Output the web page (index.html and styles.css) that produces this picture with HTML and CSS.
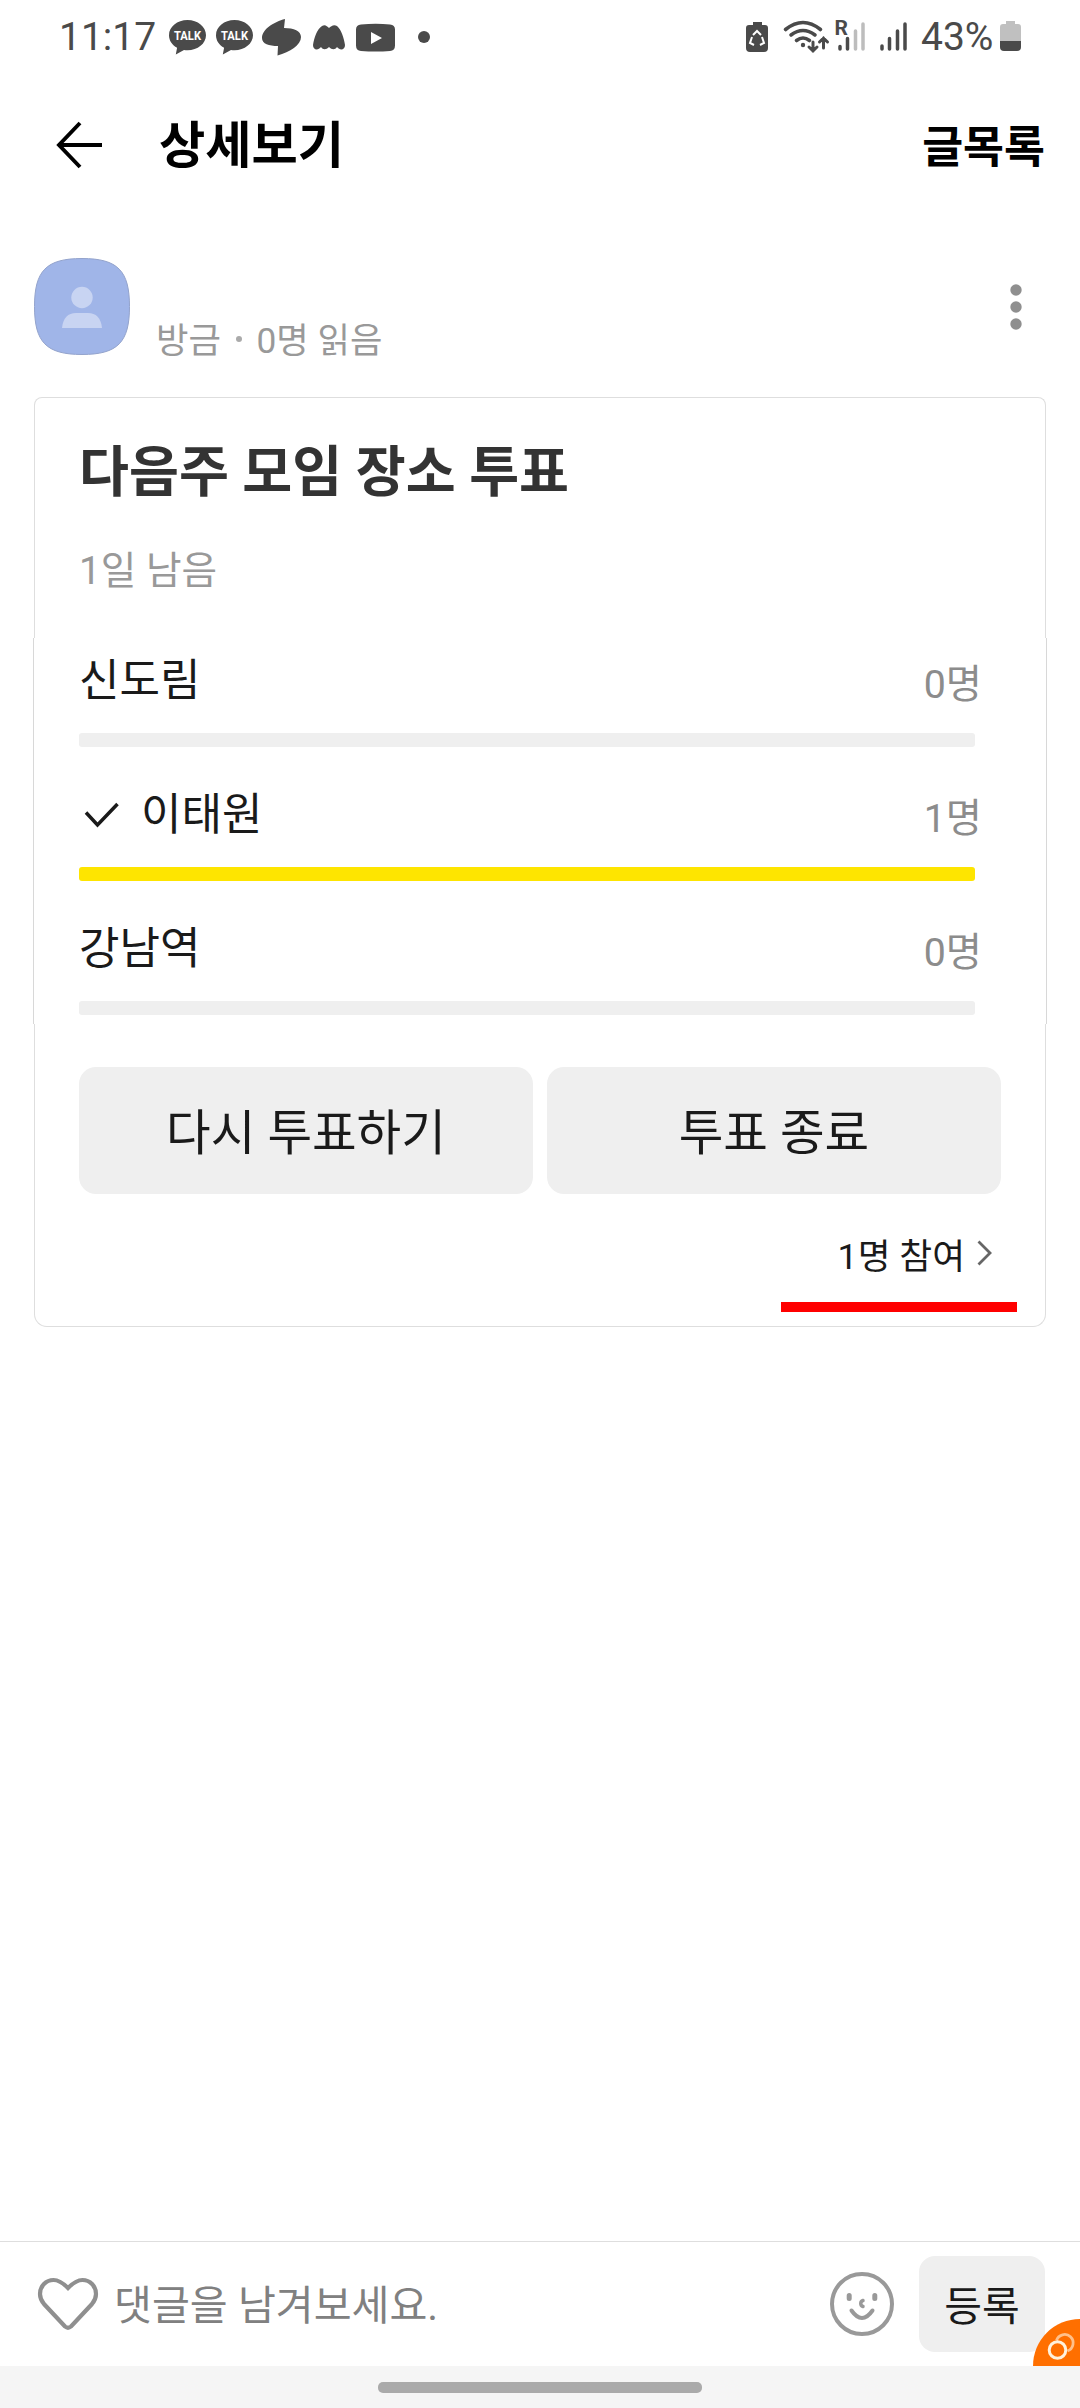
FILE: index.html
```html
<!DOCTYPE html>
<html lang="ko">
<head>
  <meta charset="UTF-8" />
  <meta name="viewport" content="width=device-width, initial-scale=1.0" />
  <title>상세보기</title>
  <link rel="stylesheet" href="styles.css">
</head>
<body>
<div class="screen">

  <div class="status-bar">
    <span class="status-time">11:17</span>
    <svg class="status-left" width="270" height="60" viewBox="160 6 270 60" fill="#4a4a4a">
      <g id="talk">
        <path d="M187.500 20c-10.200 0-18.500 6.700-18.500 15.200 0 5.400 3.200 9.900 8.100 12.600l-1.300 6.700 8.200-4.600c1.100.2 2.300.3 3.500.3 10.200 0 18.500-6.700 18.500-15s-8.300-15.200-18.500-15.200z"/>
        <text class="talk-text" x="187.500" y="40" text-anchor="middle" textLength="27" lengthAdjust="spacingAndGlyphs">TALK</text>
      </g>
      <use href="#talk" x="47"/>
      <path d="M285 19C274 22 262 29 262 38c0 6 7 8 16 8l-.500 9.500C290 52 301 45 301 37c0-6-7-9-17-9z"/>
      <path d="M322 26c3-2 5 0 7 2 2-2 5-4 8-2 4 3 7 12 8 19 0 5-5 6-8 2-2 3-5 3-8 0-3 3-6 3-8 0-3 4-8 3-8-2 1-7 4-16 9-19z"/>
      <path fill-rule="evenodd" d="M361 24.500q15-1.500 29 0 5 .5 5 5v16q0 5-5 5.500-14 1-29 0-5-.5-5-5.500v-16q0-4.500 5-5zM371 32v12l11-6z"/>
      <circle cx="424" cy="37" r="6"/>
    </svg>
    <svg class="status-icons" width="170" height="60" viewBox="742 6 170 60" fill="none" stroke="#4a4a4a" stroke-linecap="round">
      <path fill="#4a4a4a" stroke="none" d="M753 22h9v3h3q3 0 3 3v20q0 4-4 4h-14q-4 0-4-4V28q0-3 3-3h4z"/>
      <g stroke="#fff" stroke-width="2" stroke-linecap="butt"><path d="M753 35l4-4 4 4M762 37l2 6-4 2M754 45l-4-2 2-6"/></g>
      <g stroke-width="3.600">
        <path d="M785.500 29.500q17.500-14 35 0M791 35q12-9 24 0M796.500 40.500q6.500-5 13 0"/>
        <path stroke-width="3" d="M813 42v9m-4-4l4 4 4-4M823.500 48V38m-4 4l4-4 4 4"/>
      </g>
      <circle cx="803" cy="45" r="2.200" fill="#4a4a4a" stroke="none"/>
      <text class="roaming" x="834.500" y="35" fill="#4a4a4a" stroke="none">R</text>
      <g stroke-width="3.500">
        <path d="M840 46.500v2.500M847.500 38.500V49"/>
        <path stroke="#bdbdbd" d="M855.500 31v18M863 24v25"/>
        <path d="M882 46v3M889.500 38.500V49M897.500 31v18M905 24v25"/>
      </g>
    </svg>
    <span class="battery-text">43%</span>
    <svg class="battery" width="22" height="30" viewBox="0 0 22 30">
      <path fill="#c0c0c0" d="M6 0h9v3h3q3 0 3 3v14H0V6q0-3 3-3h3z"/>
      <path fill="#4a4a4a" d="M0 20h21v6q0 4-4 4H4q-4 0-4-4z"/>
    </svg>
  </div>

  <header class="header">
    <svg class="back" width="48" height="48" viewBox="0 0 48 48" fill="none" stroke="#000" stroke-width="3.900">
      <path d="M25 2L4 24l21 22M4 24h43"/>
    </svg>
    <h1 class="header-title">상세보기</h1>
    <span class="header-link">글목록</span>
  </header>

  <div class="author">
    <svg class="avatar" width="96" height="97" viewBox="0 0 96 97">
      <path fill="#a0b5e8" stroke="#93a3cc" d="M48 .5C84 .5 95.500 13 95.500 48.500S84 96.500 48 96.500.5 84 .5 48.500 12 .5 48 .5z"/>
      <circle cx="48" cy="39.500" r="10.700" fill="#c8d4f2"/>
      <path fill="#c8d4f2" d="M28 70c1-10 6-15 14-15h12c8 0 13 5 14 15z"/>
    </svg>
    <span class="author-meta">방금 <i class="dot"></i> 0명 읽음</span>
    <svg class="more" width="12" height="48" viewBox="0 0 12 48" fill="#8f8f8f">
      <circle cx="6" cy="7" r="5.700"/><circle cx="6" cy="24" r="5.700"/><circle cx="6" cy="41" r="5.700"/>
    </svg>
  </div>

  <div class="card">
    <div class="card-head">
      <h2 class="vote-title">다음주 모임 장소 투표</h2>
      <p class="vote-left">1일 남음</p>
    </div>

    <div class="options">
      <div class="option">
        <div class="option-row"><span class="option-name">신도림</span><span class="option-count">0명</span></div>
        <div class="track"></div>
      </div>
      <div class="option">
        <div class="option-row">
          <svg class="check" width="36" height="26" viewBox="0 0 36 26" fill="none" stroke="#1a1a1a" stroke-width="3.500"><path d="M2 10.500L13.500 23 33.500 2"/></svg>
          <span class="option-name">이태원</span><span class="option-count">1명</span>
        </div>
        <div class="track"><div class="fill" style="width: 100%"></div></div>
      </div>
      <div class="option">
        <div class="option-row"><span class="option-name">강남역</span><span class="option-count">0명</span></div>
        <div class="track"></div>
      </div>
    </div>

    <div class="card-foot">
      <div class="buttons">
        <button class="btn">다시 투표하기</button>
        <button class="btn">투표 종료</button>
      </div>
      <div class="joined">
        <span>1명 참여</span>
        <svg width="15" height="26" viewBox="0 0 15 26" fill="none" stroke="#666" stroke-width="2.800"><path d="M1.500 1.500L13 13 1.500 24.500"/></svg>
      </div>
      <div class="underline"></div>
    </div>
  </div>

  <div class="comment-bar">
    <svg class="heart" width="62" height="54" viewBox="0 0 62 54" fill="none" stroke="#8f8f8f" stroke-width="4.200">
      <path d="M31 11C26 6 22 3 16.500 3 9 3 3 9 3 17c0 4 1.500 7 4 10l21 22.500q3 2.500 6 0L55 27c2.500-3 4-6 4-10 0-8-6-14-13.500-14C40 3 36 6 31 11z"/>
    </svg>
    <span class="placeholder">댓글을 남겨보세요.</span>
    <svg class="smile" width="64" height="64" viewBox="0 0 64 64" fill="none" stroke="#999" stroke-width="4" stroke-linecap="round">
      <circle cx="32" cy="32" r="30"/>
      <path stroke-width="5" d="M19.200 23.500v3M44.800 23.500v3"/>
      <path d="M21.500 38.500q10.500 15 21 0"/>
      <path stroke-width="3.500" d="M33 28.500c-3 1-3 5 0 6"/>
    </svg>
    <button class="submit">등록</button>
    <svg class="floating" width="47" height="47" viewBox="0 0 47 47" fill="none">
      <path fill="#ff6f00" d="M0 47A47 47 0 0 1 47 0v47z"/>
      <path stroke="#ffc08a" stroke-width="2.800" d="M23.500 21.500a8.500 8.500 0 1 1 11 10.500"/>
      <circle cx="24.500" cy="31" r="8.300" stroke="#fff1dc" stroke-width="3"/>
    </svg>
  </div>

  <div class="nav-bar"><div class="handle"></div></div>
</div>
</body>
</html>
```
FILE: styles.css
```css
* {
  box-sizing: border-box;
}

body {
  margin: 0;
  background: #fff;
  color: #1a1a1a;
  font-family: Roboto, "Noto Sans CJK KR", sans-serif;
}

h1, h2, p {
  margin: 0;
}

svg {
  display: block;
  flex-shrink: 0;
}

button {
  border: none;
  padding: 0;
  font-family: inherit;
  color: inherit;
  background: #efefef;
}

.screen {
  display: flex;
  flex-direction: column;
  width: 1080px;
  height: 2408px;
  overflow: hidden;
}

/* Status bar */
.status-bar {
  display: flex;
  align-items: center;
  height: 72px;
  padding: 0 58px 0 59px;
  color: #4a4a4a;
  font-size: 39px;
  line-height: 72px;
}

.status-time {
  width: 101px;
  padding-top: 1px;
}

.status-icons {
  margin-left: auto;
}

.talk-text {
  font-size: 13px;
  font-weight: 700;
  fill: #fff;
}

.roaming {
  font-size: 21px;
  font-weight: 700;
}

.battery-text {
  margin-left: 9px;
  width: 79px;
  padding-top: 1px;
}

/* Header */
.header {
  display: flex;
  align-items: center;
  height: 146px;
  padding: 0 35px 0 55px;
  color: #000;
}

.header-title {
  margin-left: 56px;
  padding-top: 2px;
  font-size: 50.3px;
  line-height: 60px;
}

.header-link {
  margin-left: auto;
  padding-top: 5px;
  font-size: 44.5px;
  font-weight: 700;
  line-height: 60px;
}

/* Author */
.author {
  display: flex;
  align-items: center;
  height: 97px;
  margin: 40px 58px 42px 34px;
}

.author-meta {
  align-self: flex-end;
  margin-left: 26px;
  margin-bottom: -9px;
  font-size: 35.3px;
  line-height: 46px;
  color: #999;
}

.dot {
  display: inline-block;
  width: 6px;
  height: 6px;
  margin: 0 6px;
  border-radius: 50%;
  background: #aaa;
  vertical-align: 11px;
}

.more {
  margin-left: auto;
}

/* Vote card */
.card {
  margin: 0 34px;
}

.card-head {
  height: 241px;
  padding: 45px 44px 0;
  border: 1px solid #dedede;
  border-bottom: none;
  border-radius: 8px 8px 0 0;
}

.vote-title {
  font-size: 54.3px;
  line-height: 60px;
  color: #333;
}

.vote-left {
  margin-top: 45px;
  font-size: 38.7px;
  line-height: 46px;
  color: #999;
}

/* the option list sits one pixel wider than the rest of the card */
.options {
  height: 386px;
  margin: 0 -1px;
  padding: 10px 71px 0 45px;
  border: solid #d8d8d8;
  border-width: 0 1px;
}

.option {
  height: 134px;
}

.option-row {
  display: flex;
  align-items: center;
  height: 57px;
  margin-right: -7px;
}

.option-name {
  font-size: 44px;
}

.check {
  margin: 8px 21px 0 5px;
}

.option-count {
  margin-left: auto;
  padding-top: 7px;
  font-size: 39.3px;
  color: #8c8c8c;
}

.track {
  height: 14px;
  margin-top: 28px;
  border-radius: 3px;
  background: #efefef;
  overflow: hidden;
}

.fill {
  height: 100%;
  background: #fee500;
}

.card-foot {
  height: 303px;
  padding: 43px 44px 0;
  border: 1px solid #dedede;
  border-top: none;
  border-radius: 0 0 13px 13px;
}

.buttons {
  display: flex;
  gap: 14px;
}

.btn {
  flex: 1;
  height: 127px;
  padding-bottom: 3px;
  border-radius: 17px;
  font-size: 48.5px;
}

.joined {
  display: flex;
  justify-content: flex-end;
  align-items: center;
  gap: 12px;
  height: 50px;
  margin: 34px 9px 0 0;
  font-size: 35.7px;
}

.underline {
  width: 236px;
  height: 10px;
  margin: 24px -16px 0 auto;
  background: #f00;
}

/* Comment bar */
.comment-bar {
  position: relative;
  display: flex;
  align-items: center;
  height: 125px;
  margin-top: auto;
  padding: 0 35px 0 37px;
  border-top: 1px solid #dedede;
}

.placeholder {
  margin-left: 15px;
  padding-bottom: 4px;
  font-size: 41.2px;
  color: #808080;
}

.smile {
  margin-left: auto;
}

.submit {
  width: 126px;
  height: 96px;
  margin-left: 25px;
  padding-bottom: 2px;
  border-radius: 16px;
  font-size: 41px;
}

.floating {
  position: absolute;
  right: 0;
  bottom: 0;
}

.nav-bar {
  height: 42px;
  padding-top: 16px;
  background: #f5f5f5;
}

.handle {
  width: 324px;
  height: 11px;
  margin: 0 auto;
  border-radius: 5px;
  background: #aaa;
}
```
